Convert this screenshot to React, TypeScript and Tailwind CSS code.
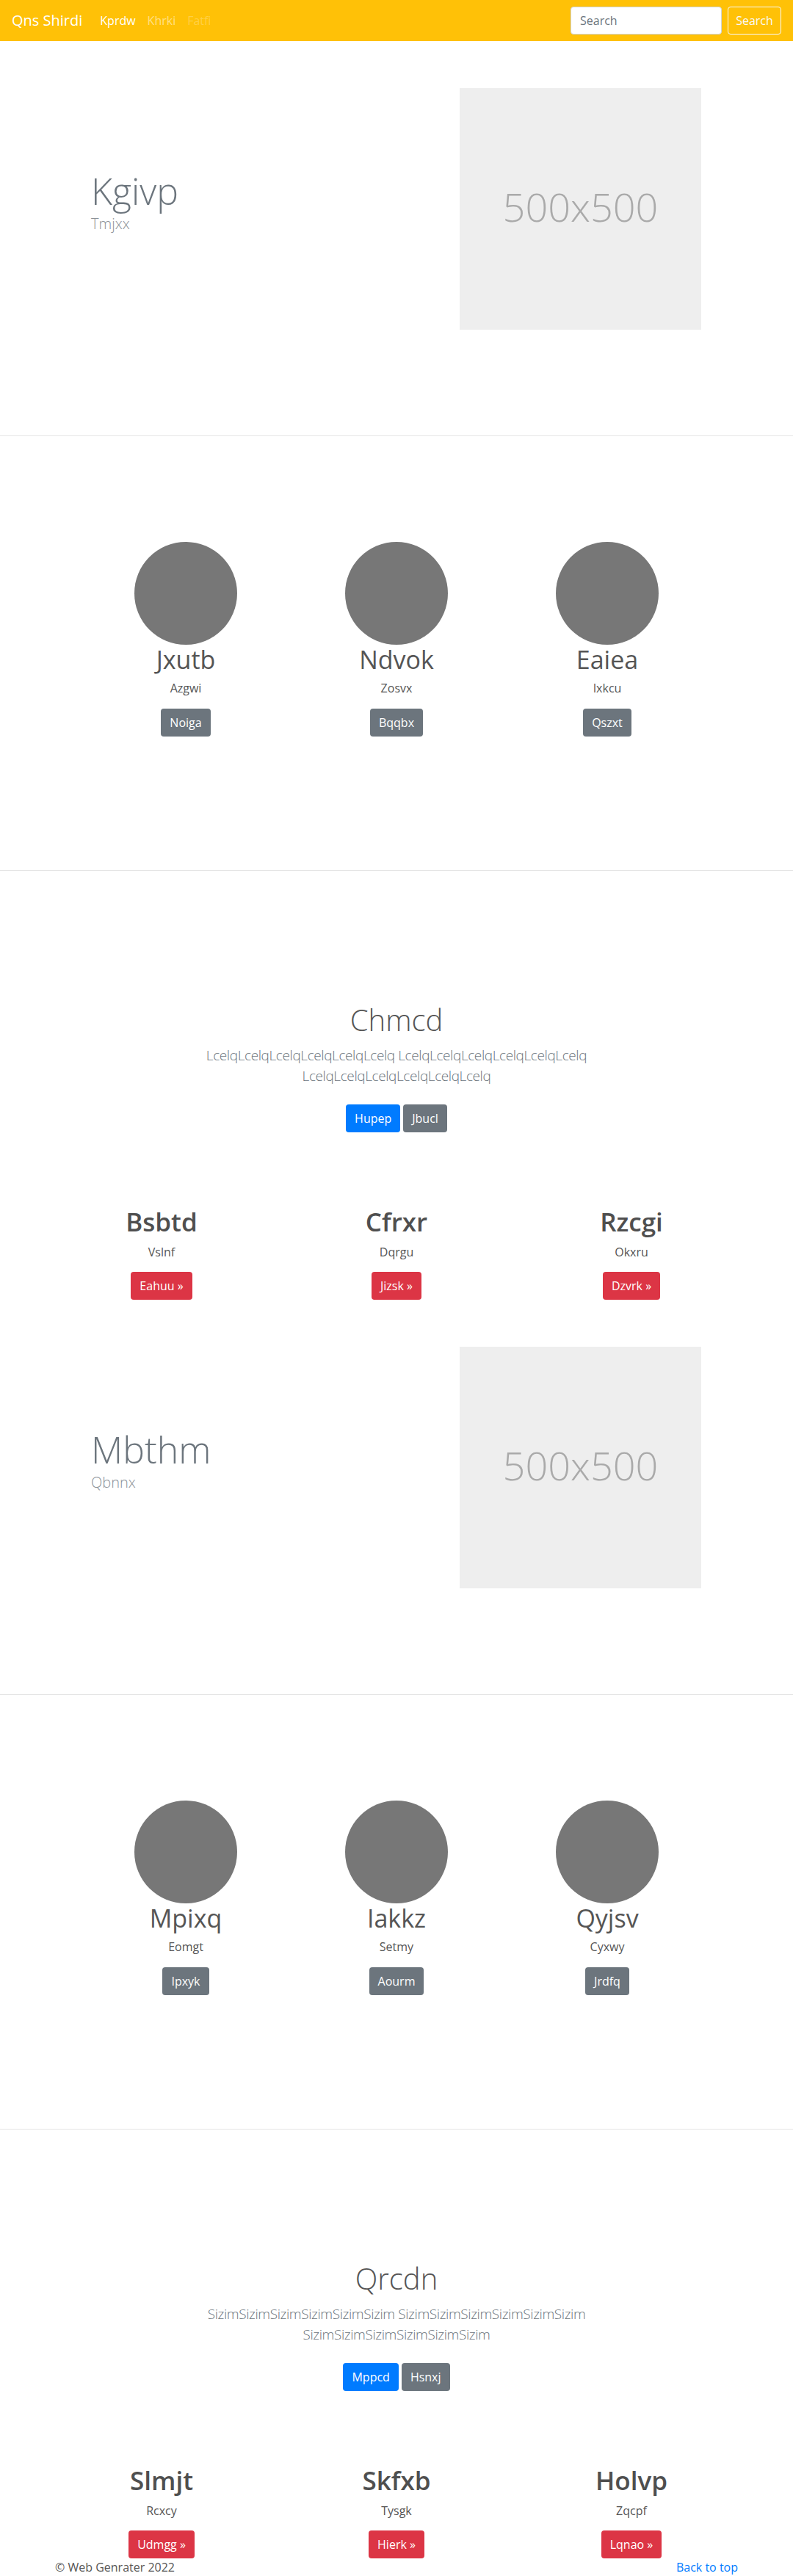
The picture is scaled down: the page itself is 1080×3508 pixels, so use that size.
const circlesA = [
  { title: 'Jxutb', text: 'Azgwi', btn: 'Noiga' },
  { title: 'Ndvok', text: 'Zosvx', btn: 'Bqqbx' },
  { title: 'Eaiea', text: 'Ixkcu', btn: 'Qszxt' },
];

const circlesB = [
  { title: 'Mpixq', text: 'Eomgt', btn: 'Ipxyk' },
  { title: 'Iakkz', text: 'Setmy', btn: 'Aourm' },
  { title: 'Qyjsv', text: 'Cyxwy', btn: 'Jrdfq' },
];

const featuresA = [
  { title: 'Bsbtd', text: 'Vslnf', btn: 'Eahuu' },
  { title: 'Cfrxr', text: 'Dqrgu', btn: 'Jizsk' },
  { title: 'Rzcgi', text: 'Okxru', btn: 'Dzvrk' },
];

const featuresB = [
  { title: 'Slmjt', text: 'Rcxcy', btn: 'Udmgg' },
  { title: 'Skfxb', text: 'Tysgk', btn: 'Hierk' },
  { title: 'Holvp', text: 'Zqcpf', btn: 'Lqnao' },
];

type Item = { title: string; text: string; btn: string };

function Navbar() {
  return (
    <nav className="flex h-[56px] items-center bg-[#ffc107] px-4">
      <a href="#" className="mr-4 text-[20px] leading-[30px] text-white">Qns Shirdi</a>
      <ul className="flex text-[16px] leading-6">
        <li><a href="#" className="px-2 text-white">Kprdw</a></li>
        <li><a href="#" className="px-2 text-white/50">Khrki</a></li>
        <li><span className="px-2 text-white/25">Fatfi</span></li>
      </ul>
      <form className="ml-auto flex items-center">
        <input
          type="text"
          placeholder="Search"
          className="mr-2 h-[38px] w-[206px] rounded border border-[#ced4da] bg-white px-3 text-[16px] text-[#495057] placeholder:text-[#6c757d]"
        />
        <button type="button" className="h-[38px] w-[73px] rounded border border-[#f8f9fa] text-[16px] text-[#f8f9fa]">
          Search
        </button>
      </form>
    </nav>
  );
}

function Hero({ title, sub }: { title: string; sub: string }) {
  return (
    <section className="border-b border-[#e5e5e5] pt-[64px] pb-[144px]">
      <div className="mx-auto flex w-[960px] items-start">
        <div className="flex-1 pl-[64px] pt-[110px]">
          <h1 className="text-[50px] font-light leading-[60px] text-[#6c757d]">{title}</h1>
          <p className="text-[20px] font-light leading-[30px] text-[#8b9197]">{sub}</p>
        </div>
        <div className="mr-[65px] flex h-[329px] w-[329px] items-center justify-center bg-[#eeeeee] pb-[6px]">
          <span className="text-[54px] font-light text-[#aaaaaa]">500x500</span>
        </div>
      </div>
    </section>
  );
}

function Circles({ items }: { items: Item[] }) {
  return (
    <section className="border-b border-[#e5e5e5] pt-[144px] pb-[182px]">
      <div className="mx-auto grid w-[861px] grid-cols-3">
        {items.map((it) => (
          <div key={it.title} className="flex flex-col items-center text-center">
            <div className="h-[140px] w-[140px] rounded-full bg-[#777777]" />
            <h2 className="text-[34px] leading-[40px] text-[#555555]">{it.title}</h2>
            <p className="mt-[7px] text-[16px] leading-6 text-[#555555]">{it.text}</p>
            <button type="button" className="mt-4 h-[38px] rounded bg-[#6c757d] px-3 text-[16px] text-white">
              {it.btn}
            </button>
          </div>
        ))}
      </div>
    </section>
  );
}

function Intro({ title, word, primary, secondary }: { title: string; word: string; primary: string; secondary: string }) {
  const chunk = word.repeat(6);
  return (
    <div className="pt-[179px] text-center">
      <h1 className="text-[40px] font-light leading-[48px] text-[#555555]">{title}</h1>
      <p className="mx-auto mt-[10px] max-w-[760px] text-[19px] font-light leading-[28px] tracking-[-0.4px] text-[#6c757d]">
        {chunk} {chunk} {chunk}
      </p>
      <div className="mt-[25px] flex justify-center gap-1">
        <button type="button" className="h-[38px] rounded bg-[#007bff] px-3 text-[16px] text-white">{primary}</button>
        <button type="button" className="h-[38px] rounded bg-[#6c757d] px-3 text-[16px] text-white">{secondary}</button>
      </div>
    </div>
  );
}

function Features({ items }: { items: Item[] }) {
  return (
    <div className="mx-auto mt-[101px] grid w-[960px] grid-cols-3">
      {items.map((it) => (
        <div key={it.title} className="flex flex-col items-center text-center">
          <h2 className="text-[35px] font-semibold leading-[42px] text-[#4f4f4f]">{it.title}</h2>
          <p className="mt-2 text-[16px] leading-6 text-[#555555]">{it.text}</p>
          <button type="button" className="mt-[15px] h-[38px] rounded bg-[#dc3545] px-3 text-[16px] text-white">
            {it.btn} &raquo;
          </button>
        </div>
      ))}
    </div>
  );
}

export default function App() {
  return (
    <div className="min-h-screen bg-white font-['Open_Sans','Noto_Sans',sans-serif]">
      <Navbar />
      <Hero title="Kgivp" sub="Tmjxx" />
      <Circles items={circlesA} />
      <Intro title="Chmcd" word="Lcelq" primary="Hupep" secondary="Jbucl" />
      <Features items={featuresA} />
      <Hero title="Mbthm" sub="Qbnnx" />
      <Circles items={circlesB} />
      <Intro title="Qrcdn" word="Sizim" primary="Mppcd" secondary="Hsnxj" />
      <Features items={featuresB} />
      <footer className="mx-auto flex w-[960px] justify-between px-[15px] text-[16px] leading-6">
        <p className="text-[#555555]">© Web Genrater 2022</p>
        <a href="#" className="text-[#007bff]">Back to top</a>
      </footer>
    </div>
  );
}
